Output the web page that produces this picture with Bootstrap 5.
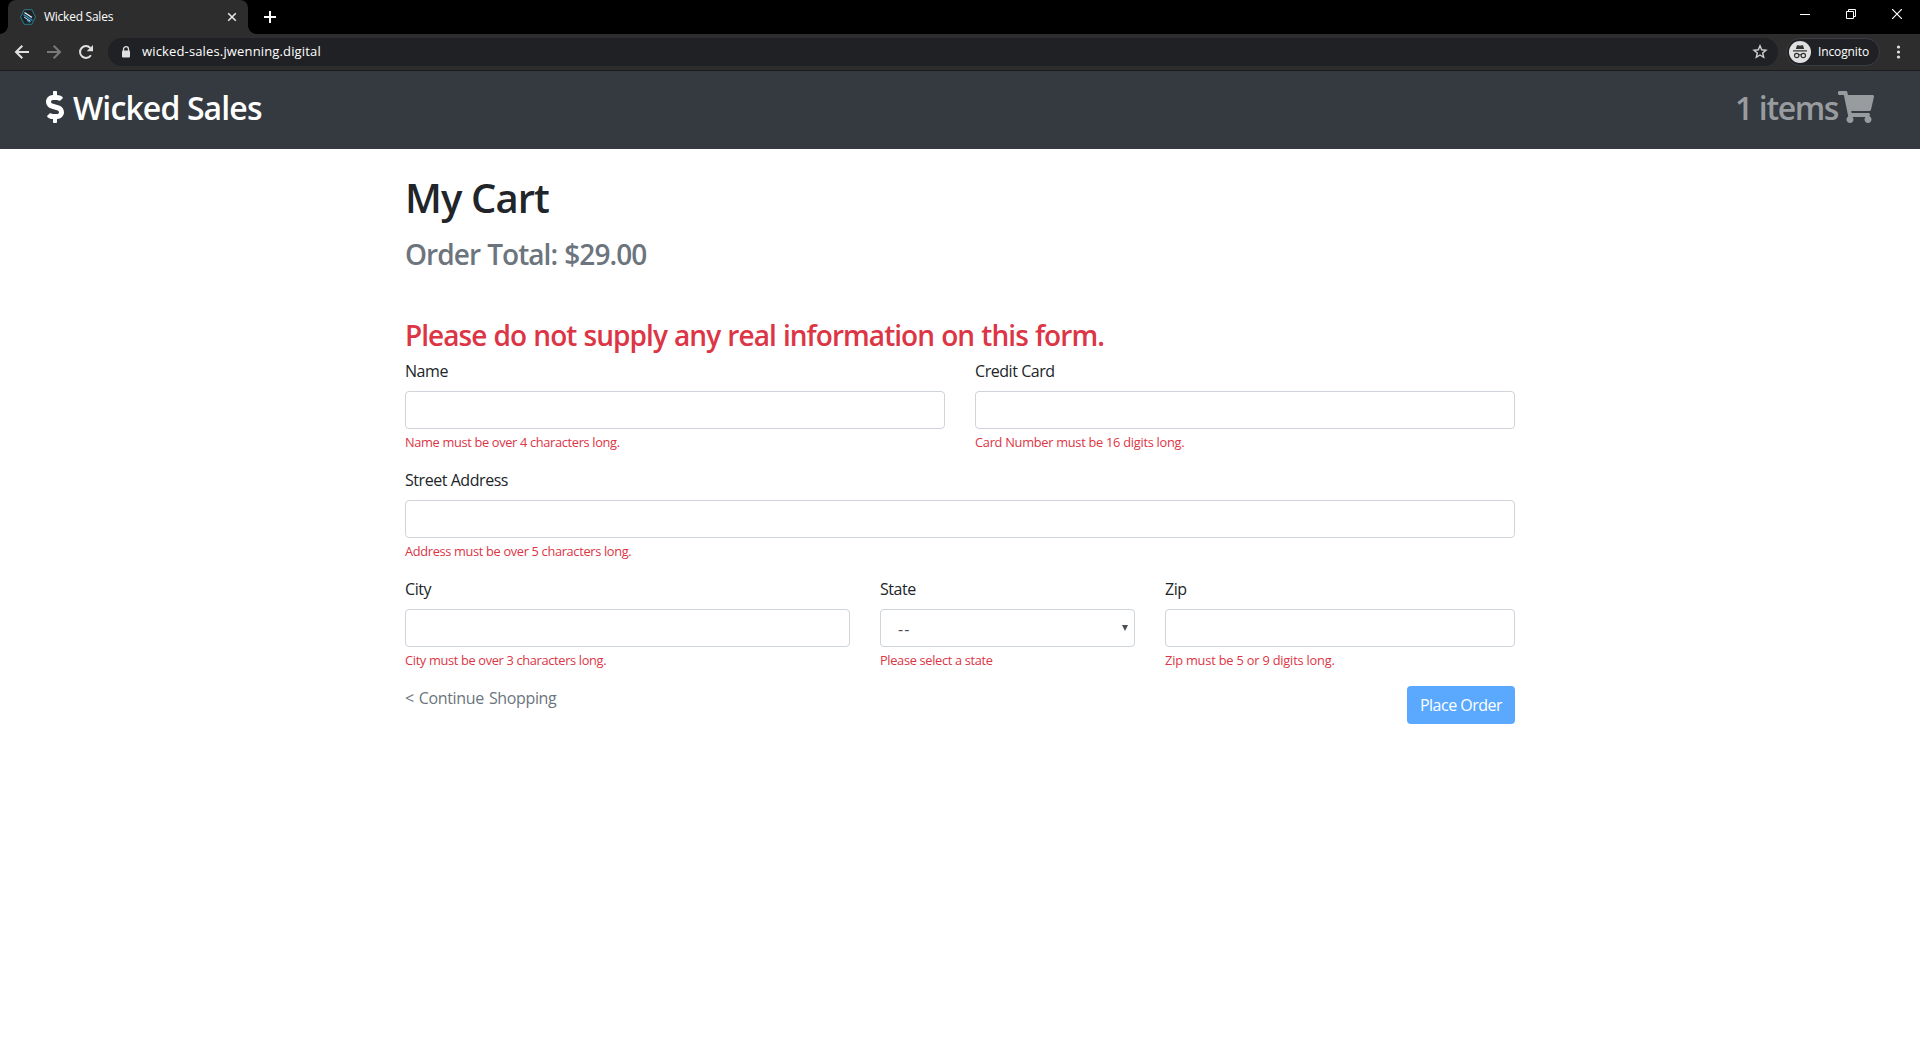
<!DOCTYPE html>
<html lang="en">
<head>
<meta charset="utf-8">
<meta name="viewport" content="width=device-width, initial-scale=1">
<title>Wicked Sales</title>
<link href="https://cdn.jsdelivr.net/npm/bootstrap@5.3.0/dist/css/bootstrap.min.css" rel="stylesheet">
<style>
body{font-family:"Open Sans","Noto Sans",sans-serif;color:#212529;background:#fff;height:1040px;overflow:hidden}
svg{display:block;flex:none}
.tabstrip{height:34px;background:#000;color:#fff;padding:0 18px 0 8px}
.tab-active{width:240px;height:34px;background:#2d2d2d;border-radius:8px 8px 0 0;padding:0 11px 0 12px;font-size:12px;letter-spacing:-.25px;position:relative}
.tab-active::before,.tab-active::after{content:"";position:absolute;bottom:0;width:8px;height:8px}
.tab-active::before{left:-8px;background:radial-gradient(circle at 0 0,#000 7.5px,#2d2d2d 8px)}
.tab-active::after{right:-8px;background:radial-gradient(circle at 100% 0,#000 7.5px,#2d2d2d 8px)}
.new-tab{margin-left:16px}
.win-controls{gap:36px;padding-bottom:6px}
.toolbar{height:37px;background:#2d2d2d;border-bottom:1px solid #1c1c1d;padding:0 13px 0 14px;color:#fff}
.nav-icons{gap:16px}
.address{height:28px;background:#202124;border-radius:14px;margin-left:14px;padding:0 10px 0 13px;font-size:13px;letter-spacing:.15px}
.address-text{padding-left:11px}
.incog{height:28px;width:94px;border:1px solid #3c3d40;border-radius:14px;background:#202124;padding-left:2px;font-size:12px;letter-spacing:-.12px;margin:0 11px 0 8px;gap:7px}
.site-head{height:78px;background:#343a40;padding:0 46px 6px;font-size:32px;font-weight:600;line-height:38px}
.head-text{padding-top:1px}
.brand{letter-spacing:-.88px;gap:9px}
.cart-link{color:#999c9f;letter-spacing:-1.4px}
.page-body{width:1140px;margin:0 auto;padding:25px 15px 0}
.row{--bs-gutter-x:30px}
h1{font-size:40px;font-weight:600;line-height:48px;margin:0 0 16px;letter-spacing:-.9px}
h3{font-size:28px;font-weight:600;line-height:33.6px;letter-spacing:-.95px;word-spacing:.8px}
.total{color:#6c757d;margin:0 0 47.2px}
.warn{color:#dc3545;margin:0 0 6.600px}
.field{height:109px}
.field label{display:block;line-height:24px;margin-bottom:8px;font-size:16px;letter-spacing:-.45px}
.form-control{height:38px;border:1px solid #ced4da;border-radius:4px}
.state-select{padding:0 5px 0 17px;color:#495057}
.dashes{padding-top:2px;letter-spacing:1px}
.err{display:block;color:#dc3545;font-size:12.8px;line-height:19px;margin-top:4px;letter-spacing:-.33px}
.err-wide{letter-spacing:-.19px}
.err-card{letter-spacing:-.27px}
.place{width:108px;height:38px;background:#5ba9ff;color:#fff;border:0;border-radius:4px;padding:0;letter-spacing:-.5px}
.place:hover{background:#5ba9ff;color:#fff}
.back{color:#6c757d;line-height:24px;letter-spacing:-.35px;word-spacing:1.2px}
</style>
</head>
<body>
<div class="tabstrip d-flex align-items-center">
  <div class="tab-active d-flex align-items-center">
    <svg width="16" height="16" viewBox="0 0 16 16" fill="none"><path d="M4.200.700h7.600L15.500 8l-3.700 7.300H4.200L.5 8z" fill="#1d2226" stroke="#2b7d87"/><path d="M4.500 3.500l7.500 5" stroke="#e8f2f6" stroke-width="1.300"/><path d="M3.500 5.500l9 6M7 11.200l3 2" stroke="#2e9ad0" stroke-width="1.300"/><path d="M4 8l6.500 4.300" stroke="#c9dfe8"/></svg>
    <span class="ms-2 flex-grow-1">Wicked Sales</span>
    <svg width="10" height="10" viewBox="0 0 10 10" stroke="#e6e6e6" stroke-width="1.600"><path d="M1.200 1.200l7.600 7.600M8.800 1.200L1.200 8.800"/></svg>
  </div>
  <svg class="new-tab" width="12" height="12" viewBox="0 0 12 12" stroke="#fff" stroke-width="2"><path d="M6 0v12M0 6h12"/></svg>
  <div class="win-controls d-flex align-items-center ms-auto">
    <svg width="10" height="10" viewBox="0 0 10 10"><path d="M0 5h10v1H0z" fill="#fff"/></svg>
    <svg width="10" height="10" viewBox="0 0 10 10" fill="none" stroke="#fff"><path d="M.5 2.500h7v7h-7zM2.500 2.500v-2h7v7h-2"/></svg>
    <svg width="10" height="10" viewBox="0 0 10 10" stroke="#fff" stroke-width="1.200"><path d="M0 0l10 10M10 0L0 10"/></svg>
  </div>
</div>
<div class="toolbar d-flex align-items-center">
  <div class="nav-icons d-flex">
    <svg width="16" height="16" viewBox="0 0 16 16" fill="none" stroke="#e0e0e0" stroke-width="2"><path d="M15 8H2.500M8.300 1.700L2 8l6.300 6.300"/></svg>
    <svg width="16" height="16" viewBox="0 0 16 16" fill="none" stroke="#797979" stroke-width="2"><path d="M1 8h12.500M7.700 1.700L14 8l-6.300 6.300"/></svg>
    <svg width="16" height="16" viewBox="0 0 16 16"><path d="M12.900 11.200A5.900 5.900 0 1 1 12.300 4" fill="none" stroke="#e0e0e0" stroke-width="2"/><path d="M15 1v6.300H8.700z" fill="#e0e0e0"/></svg>
  </div>
  <div class="address d-flex align-items-center flex-grow-1">
    <svg width="10" height="12" viewBox="0 0 10 12"><path d="M2.500 5V3.200a2.500 2.500 0 0 1 5 0V5" fill="none" stroke="#e0e0e0" stroke-width="1.300"/><rect x="1" y="4.500" width="8" height="7" rx="1" fill="#e0e0e0"/></svg>
    <span class="address-text">wicked-sales.jwenning.digital</span>
    <svg class="ms-auto" width="16" height="16" viewBox="0 0 16 16" fill="none" stroke="#d0d0d0" stroke-width="1.400"><path d="M8 1.800l1.700 4 4.300.4-3.300 2.800 1 4.300L8 11l-3.700 2.300 1-4.300L2 6.200l4.300-.4z"/></svg>
  </div>
  <div class="incog d-flex align-items-center">
    <svg width="22" height="22" viewBox="0 0 22 22"><circle cx="11" cy="11" r="11" fill="#e0e0e0"/><path d="M6.800 8l1.200-3.800h1.600l1.400.6 1.400-.6H14L15.200 8zM4 9.300h14v1.200H4z" fill="#333"/><path d="M10 14q1-.8 2 0" fill="none" stroke="#333"/><circle cx="7.700" cy="14.500" r="2.200" fill="none" stroke="#333" stroke-width="1.200"/><circle cx="14.300" cy="14.500" r="2.200" fill="none" stroke="#333" stroke-width="1.200"/></svg>
    <span>Incognito</span>
  </div>
  <svg width="16" height="16" viewBox="0 0 16 16" fill="#e0e0e0"><circle cx="7.500" cy="3" r="1.600"/><circle cx="7.500" cy="8" r="1.600"/><circle cx="7.500" cy="13" r="1.600"/></svg>
</div>
<header class="site-head d-flex align-items-center justify-content-between text-white">
  <div class="brand d-flex align-items-center">
    <svg width="18" height="32" viewBox="0 0 288 512" fill="#fff"><path d="M209.200 233.400l-108-31.600C88.700 198.200 80 186.500 80 173.500c0-16.300 13.200-29.500 29.500-29.500h66.300c12.200 0 24.200 3.700 34.200 10.500 6.100 4.100 14.300 3.100 19.500-2l34.800-34c7.100-6.900 6.100-18.400-1.800-24.500C238 74.800 207.400 64.100 176 64V16c0-8.800-7.200-16-16-16h-32c-8.800 0-16 7.200-16 16v48h-2.500C45.800 64-5.400 118.700.5 183.600c4.200 46.100 39.400 83.600 83.800 96.600l102.500 30c12.500 3.700 21.200 15.300 21.200 28.300 0 16.300-13.200 29.500-29.500 29.500h-66.300C100 368 88 364.300 78 357.500c-6.100-4.100-14.300-3.100-19.500 2l-34.800 34c-7.100 6.900-6.100 18.400 1.800 24.500 24.500 19.200 55.100 29.900 86.500 30v48c0 8.800 7.200 16 16 16h32c8.800 0 16-7.200 16-16v-48.200c46.600-.9 90.300-28.600 105.700-72.700 21.500-61.600-14.600-124.800-72.500-141.700z"/></svg>
    <span class="head-text">Wicked Sales</span>
  </div>
  <div class="cart-link d-flex align-items-center">
    <span class="head-text">1 items</span>
    <svg width="36" height="32" viewBox="0 0 576 512" fill="currentColor"><path d="M528.120 301.319l47.273-208C578.806 78.301 567.391 64 551.990 64H159.208l-9.166-44.810C147.758 8.021 137.930 0 126.529 0H24C10.745 0 0 10.745 0 24v16c0 13.255 10.745 24 24 24h69.883l70.248 343.435C147.325 417.100 136 435.222 136 456c0 30.928 25.072 56 56 56s56-25.072 56-56c0-15.674-6.447-29.835-16.824-40h209.647C430.447 426.165 424 440.326 424 456c0 30.928 25.072 56 56 56s56-25.072 56-56c0-22.172-12.888-41.332-31.579-50.405l5.517-24.276c3.413-15.018-8.002-29.319-23.403-29.319H218.117l-6.545-32h293.145c11.206 0 20.920-7.754 23.403-18.681z"/></svg>
  </div>
</header>
<main class="page-body">
  <h1>My Cart</h1>
  <h3 class="total">Order Total: $29.00</h3>
  <h3 class="warn">Please do not supply any real information on this form.</h3>
  <form>
    <div class="row">
      <div class="col-6 field"><label for="name">Name</label><input id="name" class="form-control"><span class="err">Name must be over 4 characters long.</span></div>
      <div class="col-6 field"><label for="card">Credit Card</label><input id="card" class="form-control"><span class="err err-card">Card Number must be 16 digits long.</span></div>
      <div class="col-12 field"><label for="street">Street Address</label><input id="street" class="form-control"><span class="err">Address must be over 5 characters long.</span></div>
      <div class="col-5 field"><label for="city">City</label><input id="city" class="form-control"><span class="err">City must be over 3 characters long.</span></div>
      <div class="col-3 field"><label>State</label>
        <div class="form-control state-select d-flex align-items-center justify-content-between"><span class="dashes">--</span><svg width="8" height="6" viewBox="0 0 8 6"><path d="M1 0h6L4 6z" fill="#495057"/></svg></div>
        <span class="err">Please select a state</span></div>
      <div class="col-4 field"><label for="zip">Zip</label><input id="zip" class="form-control"><span class="err err-wide">Zip must be 5 or 9 digits long.</span></div>
    </div>
    <div class="d-flex justify-content-between align-items-start">
      <a class="back text-decoration-none">&lt; Continue Shopping</a>
      <button type="button" class="btn place">Place Order</button>
    </div>
  </form>
</main>
<script src="https://cdn.jsdelivr.net/npm/bootstrap@5.3.0/dist/js/bootstrap.bundle.min.js"></script>
</body>
</html>
